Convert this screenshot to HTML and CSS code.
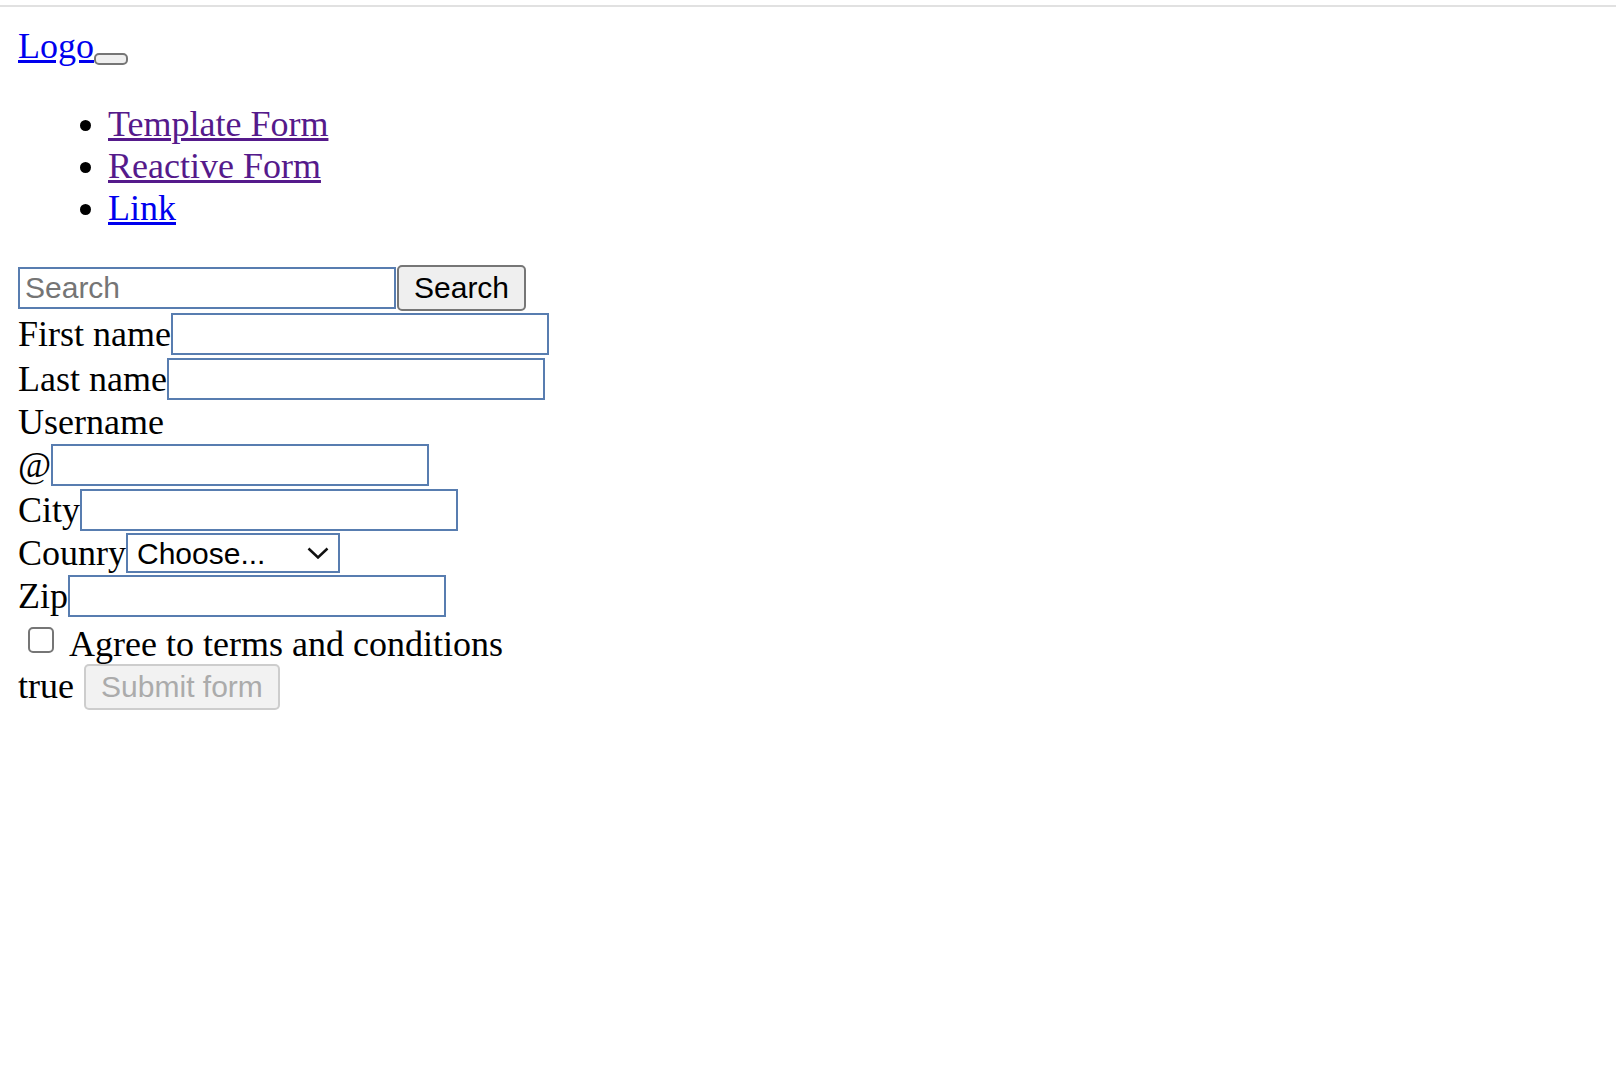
FILE: index.html
```html
<!DOCTYPE html>
<html lang="en">
<head>
<meta charset="utf-8">
<title>Forms</title>
<link rel="stylesheet" href="styles.css">
</head>
<body>
<div class="topline"></div>
<div class="page">
  <nav class="navbar">
    <div class="brand-row"><a class="brand link-new" href="#">Logo</a><button class="toggler" type="button" aria-label="Toggle navigation"></button></div>
    <ul class="nav-list">
      <li><a class="link-visited" href="#">Template Form</a></li>
      <li><a class="link-visited" href="#">Reactive Form</a></li>
      <li><a class="link-new" href="#">Link</a></li>
    </ul>
    <form class="search-row">
      <input class="field search-field" type="search" placeholder="Search"><button class="btn" type="button">Search</button>
    </form>
  </nav>
  <form class="main-form">
    <div class="row"><label class="label">First name</label><input class="field" type="text"></div>
    <div class="row"><label class="label">Last name</label><input class="field" type="text"></div>
    <div class="text-row">Username</div>
    <div class="row"><span class="label">@</span><input class="field" type="text"></div>
    <div class="row"><label class="label">City</label><input class="field" type="text"></div>
    <div class="row row-select"><label class="label">Counry</label>
      <div class="select-wrap">
        <select class="select"><option>Choose...</option></select>
        <svg class="chevron" width="22" height="12" viewBox="0 0 22 12"><path d="M1.5 1.5 L11 10.5 L20.5 1.5" fill="none" stroke="#111" stroke-width="2.5"/></svg>
      </div>
    </div>
    <div class="row"><label class="label">Zip</label><input class="field" type="text"></div>
    <div class="check-row"><input class="checkbox" type="checkbox"><label class="label check-label">Agree to terms and conditions</label></div>
    <div class="submit-row"><span class="label submit-label">true</span><button class="btn btn-disabled" type="button" disabled>Submit form</button></div>
  </form>
</div>
</body>
</html>
```
FILE: styles.css
```css
html, body {
  margin: 0;
  padding: 0;
  background: #ffffff;
}

body {
  font-family: "Liberation Serif", "Times New Roman", serif;
  font-size: 36px;
  color: #000000;
}

.topline {
  margin-top: 5px;
  height: 2px;
  background: #e1e1e1;
}

.page {
  padding: 18px;
}

.brand-row {
  line-height: normal;
}

.link-new {
  color: #0000ee;
}

.link-visited {
  color: #551a8b;
}

.toggler {
  display: inline-block;
  width: 34px;
  height: 12px;
  margin: 0;
  padding: 0;
  box-sizing: border-box;
  border: 2px solid #767676;
  border-radius: 5px;
  background: #efefef;
  vertical-align: -5px;
}

.nav-list {
  margin: 36px 0 34px;
  padding-left: 90px;
  list-style: disc;
}

.search-row {
  display: flex;
  align-items: center;
  height: 49px;
  margin: 0;
}

.main-form {
  margin: 0;
}

.row {
  display: flex;
  align-items: center;
  height: 44.5px;
}

.row-select {
  height: 42px;
}

.text-row {
  line-height: normal;
}

.label {
  white-space: nowrap;
}

.field {
  flex: none;
  width: 378px;
  height: 42px;
  box-sizing: border-box;
  margin: 0;
  padding: 0 5px;
  border: 2px solid #587db0;
  border-radius: 0;
  background: #ffffff;
  font-family: "Liberation Sans", Arial, sans-serif;
  font-size: 30px;
  color: #000;
  outline: none;
  -webkit-appearance: none;
  appearance: none;
}

.field::placeholder {
  color: #757575;
}

.btn {
  flex: none;
  height: 46px;
  box-sizing: border-box;
  margin: 0 0 0 1px;
  padding: 0 15px;
  border: 2px solid #767676;
  border-radius: 5px;
  background: #efefef;
  font-family: "Liberation Sans", Arial, sans-serif;
  font-size: 30px;
  color: #000;
}

.select-wrap {
  position: relative;
  flex: none;
  width: 214px;
  height: 40px;
}

.select {
  display: block;
  width: 214px;
  height: 40px;
  box-sizing: border-box;
  margin: 0;
  padding: 0 0 0 9px;
  border: 2px solid #587db0;
  border-radius: 0;
  background: #ffffff;
  font-family: "Liberation Sans", Arial, sans-serif;
  font-size: 30px;
  color: #000;
  -webkit-appearance: none;
  appearance: none;
}

.chevron {
  position: absolute;
  right: 11px;
  top: 14px;
  pointer-events: none;
}

.check-row {
  display: flex;
  align-items: flex-start;
  height: 45px;
}

.checkbox {
  flex: none;
  width: 26px;
  height: 26px;
  box-sizing: border-box;
  margin: 8px 15px 0 10px;
  border: 2px solid #767676;
  border-radius: 5px;
  background: #ffffff;
  -webkit-appearance: none;
  appearance: none;
}

.check-label {
  margin-top: 4px;
}

.submit-row {
  display: flex;
  align-items: flex-start;
  height: 48px;
}

.submit-label {
  margin-top: 1.5px;
}

.btn-disabled {
  width: 196px;
  margin-left: 10px;
  border-color: rgba(118, 118, 118, 0.3);
  background: #f2f2f2;
  color: #ababab;
}
```
